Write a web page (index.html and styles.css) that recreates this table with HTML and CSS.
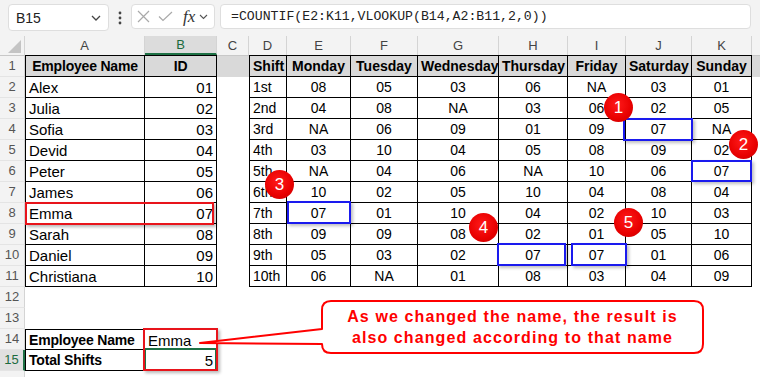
FILE: index.html
```html
<!DOCTYPE html>
<html>
<head>
<meta charset="utf-8">
<link rel="stylesheet" href="styles.css">
</head>
<body>
<div class="toolbar">
  <div class="namebox"><span>B15</span>
    <svg class="chev" width="10" height="6" viewBox="0 0 10 6"><polyline points="1,1 5,5 9,1" fill="none" stroke="#444" stroke-width="1.3"/></svg>
  </div>
  <div class="dots"><svg width="4" height="14" viewBox="0 0 4 14"><circle cx="2" cy="2" r="1.4" fill="#444"/><circle cx="2" cy="7" r="1.4" fill="#444"/><circle cx="2" cy="12" r="1.4" fill="#444"/></svg></div>
  <div class="fxbox">
    <svg width="13" height="13" viewBox="0 0 13 13"><path d="M1 1 L12 12 M12 1 L1 12" stroke="#a9a9a9" stroke-width="1.2" fill="none"/></svg>
    <svg width="15" height="11" viewBox="0 0 15 11"><polyline points="1,5.5 5,9.5 14,1" stroke="#a9a9a9" stroke-width="1.2" fill="none"/></svg>
    <span class="fx">fx</span>
    <svg width="9" height="6" viewBox="0 0 9 6"><polyline points="1,1 4.5,4.5 8,1" fill="none" stroke="#555" stroke-width="1.1"/></svg>
  </div>
  <div class="formula">=COUNTIF(E2:K11,VLOOKUP(B14,A2:B11,2,0))</div>
</div>

<div class="sheet">
  <!-- column headers -->
  <div class="corner"><svg width="13" height="13" viewBox="0 0 13 13"><polygon points="13,0 13,13 0,13" fill="#c4c4c4"/></svg></div>
  <div class="ch">A</div><div class="ch selc">B</div><div class="ch">C</div><div class="ch">D</div><div class="ch">E</div><div class="ch">F</div><div class="ch">G</div><div class="ch">H</div><div class="ch">I</div><div class="ch">J</div><div class="ch">K</div><div class="ch last"></div>

  <!-- row 1 -->
  <div class="rh r1">1</div>
  <div class="c g t tl tt b m lf">Employee Name</div>
  <div class="c g t tt b m lf">ID</div>
  <div class="c g gt"></div>
  <div class="c g t tl tt b">Shift</div>
  <div class="c g t tt b m">Monday</div>
  <div class="c g t tt b m">Tuesday</div>
  <div class="c g t tt b m">Wednesday</div>
  <div class="c g t tt b m">Thursday</div>
  <div class="c g t tt b m">Friday</div>
  <div class="c g t tt b m">Saturday</div>
  <div class="c g t tt b m">Sunday</div>
  <div class="c g gt"></div>

  <!-- row 2 -->
  <div class="rh">2</div>
  <div class="c t tl lf">Alex</div><div class="c t r lf">01</div><div class="c"></div>
  <div class="c t tl">1st</div><div class="c t m">08</div><div class="c t m">05</div><div class="c t m">03</div><div class="c t m">06</div><div class="c t m">NA</div><div class="c t m">03</div><div class="c t m">01</div><div class="c"></div>
  <!-- row 3 -->
  <div class="rh">3</div>
  <div class="c t tl lf">Julia</div><div class="c t r lf">02</div><div class="c"></div>
  <div class="c t tl">2nd</div><div class="c t m">04</div><div class="c t m">08</div><div class="c t m">NA</div><div class="c t m">03</div><div class="c t m">06</div><div class="c t m">02</div><div class="c t m">05</div><div class="c"></div>
  <!-- row 4 -->
  <div class="rh">4</div>
  <div class="c t tl lf">Sofia</div><div class="c t r lf">03</div><div class="c"></div>
  <div class="c t tl">3rd</div><div class="c t m">NA</div><div class="c t m">06</div><div class="c t m">09</div><div class="c t m">01</div><div class="c t m">09</div><div class="c t m">07</div><div class="c t m">NA</div><div class="c"></div>
  <!-- row 5 -->
  <div class="rh">5</div>
  <div class="c t tl lf">Devid</div><div class="c t r lf">04</div><div class="c"></div>
  <div class="c t tl">4th</div><div class="c t m">03</div><div class="c t m">10</div><div class="c t m">04</div><div class="c t m">05</div><div class="c t m">08</div><div class="c t m">09</div><div class="c t m">02</div><div class="c"></div>
  <!-- row 6 -->
  <div class="rh">6</div>
  <div class="c t tl lf">Peter</div><div class="c t r lf">05</div><div class="c"></div>
  <div class="c t tl">5th</div><div class="c t m">NA</div><div class="c t m">04</div><div class="c t m">06</div><div class="c t m">NA</div><div class="c t m">10</div><div class="c t m">06</div><div class="c t m">07</div><div class="c"></div>
  <!-- row 7 -->
  <div class="rh">7</div>
  <div class="c t tl lf">James</div><div class="c t r lf">06</div><div class="c"></div>
  <div class="c t tl">6th</div><div class="c t m">10</div><div class="c t m">02</div><div class="c t m">05</div><div class="c t m">10</div><div class="c t m">04</div><div class="c t m">08</div><div class="c t m">04</div><div class="c"></div>
  <!-- row 8 -->
  <div class="rh">8</div>
  <div class="c t tl lf">Emma</div><div class="c t r lf">07</div><div class="c"></div>
  <div class="c t tl">7th</div><div class="c t m">07</div><div class="c t m">01</div><div class="c t m">10</div><div class="c t m">04</div><div class="c t m">02</div><div class="c t m">10</div><div class="c t m">03</div><div class="c"></div>
  <!-- row 9 -->
  <div class="rh">9</div>
  <div class="c t tl lf">Sarah</div><div class="c t r lf">08</div><div class="c"></div>
  <div class="c t tl">8th</div><div class="c t m">09</div><div class="c t m">09</div><div class="c t m">08</div><div class="c t m">02</div><div class="c t m">01</div><div class="c t m">05</div><div class="c t m">10</div><div class="c"></div>
  <!-- row 10 -->
  <div class="rh">10</div>
  <div class="c t tl lf">Daniel</div><div class="c t r lf">09</div><div class="c"></div>
  <div class="c t tl">9th</div><div class="c t m">05</div><div class="c t m">03</div><div class="c t m">02</div><div class="c t m">07</div><div class="c t m">07</div><div class="c t m">01</div><div class="c t m">06</div><div class="c"></div>
  <!-- row 11 -->
  <div class="rh">11</div>
  <div class="c t tl lf">Christiana</div><div class="c t r lf">10</div><div class="c"></div>
  <div class="c t tl">10th</div><div class="c t m">06</div><div class="c t m">NA</div><div class="c t m">01</div><div class="c t m">08</div><div class="c t m">03</div><div class="c t m">04</div><div class="c t m">09</div><div class="c"></div>
  <!-- row 12-13 -->
  <div class="rh">12</div><div class="c span"></div>
  <div class="rh">13</div><div class="c span"></div>
  <!-- row 14 -->
  <div class="rh">14</div>
  <div class="c t tl tt b lf">Employee Name</div><div class="c t tt lf">Emma</div><div class="c rest"></div>
  <!-- row 15 -->
  <div class="rh selr">15</div>
  <div class="c t tl b lf">Total Shifts</div><div class="c t r lf">5</div><div class="c rest"></div>
  <!-- row 16 (cut off at the window edge) -->
  <div class="rh"></div><div class="c span"></div>
</div>

<!-- overlays -->
<div class="hl-red row8"></div>
<div class="sel15"></div>
<div class="hl-red res"></div>
<div class="hl-blue j4"></div>
<div class="hl-blue k6"></div>
<div class="hl-blue e8"></div>
<div class="hl-blue h10"></div>
<div class="hl-blue i10"></div>

<div class="badge n1">1</div>
<div class="badge n2">2</div>
<div class="badge n3">3</div>
<div class="badge n4">4</div>
<div class="badge n5">5</div>

<svg class="callout-shape" width="515" height="65" viewBox="0 0 515 65">
  <path d="M136 6 H499 Q508 6 508 15 V49 Q508 58 499 58 H136 Q127 58 127 49 L5 48 L127 34 V15 Q127 6 136 6 Z" fill="#fff" stroke="#ff0000" stroke-width="2" stroke-linejoin="round"/>
</svg>
<div class="callout-text">As we changed the name, the result is<br>also changed according to that name</div>
</body>
</html>
```
FILE: styles.css
```css
html, body {
  margin: 0;
  padding: 0;
}
body {
  width: 760px;
  height: 377px;
  overflow: hidden;
  background: #fff;
  position: relative;
  font-family: "Liberation Sans", Arial, sans-serif;
  color: #000;
}

/* ---------- toolbar ---------- */
.toolbar {
  height: 36px;
  box-sizing: border-box;
  background: #f3f3f3;
  display: flex;
  align-items: flex-start;
  padding: 4px 0 0 8px;
}
.namebox {
  width: 101px;
  height: 27px;
  box-sizing: border-box;
  background: #fff;
  border: 1px solid #dedede;
  border-radius: 4px;
  display: flex;
  align-items: center;
  justify-content: space-between;
  padding: 0 7px 0 7px;
  font-size: 14px;
  color: #222;
}
.namebox span { padding-top: 1px; }
.dots {
  width: 22px;
  height: 27px;
  display: flex;
  align-items: center;
  justify-content: center;
}
.fxbox {
  width: 84px;
  height: 25px;
  box-sizing: border-box;
  background: #fff;
  border: 1px solid #dedede;
  border-radius: 4px;
  display: flex;
  align-items: center;
  padding: 0 3px 0 5px;
  gap: 8px;
}
.fxbox .fx {
  font-family: "Liberation Serif", "DejaVu Serif", serif;
  font-style: italic;
  font-size: 17px;
  color: #333;
  margin-left: 2px;
  margin-right: -4px;
  line-height: 1;
}
.formula {
  margin-left: 5px;
  width: 531px;
  height: 25px;
  box-sizing: border-box;
  background: #fff;
  border: 1px solid #dedede;
  border-radius: 4px;
  padding: 0 0 0 10px;
  font-family: "Liberation Mono", "DejaVu Sans Mono", monospace;
  font-size: 13.2px;
  line-height: 24px;
  color: #222;
  white-space: nowrap;
}

/* ---------- sheet grid ---------- */
.sheet {
  display: grid;
  grid-template-columns: 25px 120px 72px 32px 38px 64px 67px 81px 69px 58px 66px 60px 8px;
  grid-template-rows: 19px 22px repeat(15, 21px);
}
.corner {
  background: #f3f3f3;
  border-right: 1px solid #d4d4d4;
  box-sizing: border-box;
  display: flex;
  align-items: flex-end;
  justify-content: flex-end;
  padding: 0 3px 2px 0;
}
.ch {
  background: #f3f3f3;
  border-right: 1px solid #d4d4d4;
  box-sizing: border-box;
  font-size: 13px;
  color: #444;
  text-align: center;
  line-height: 19px;
}
.ch.last { border-right: none; }
.ch.selc {
  background: #dcdcdc;
  color: #1b6b3e;
  border-bottom: 2px solid #1e7145;
  line-height: 18px;
}
.rh {
  background: #f3f3f3;
  border-right: 1px solid #d4d4d4;
  border-bottom: 1px solid #e4e4e4;
  box-sizing: border-box;
  font-size: 13px;
  color: #555;
  text-align: center;
  line-height: 20px;
}
.rh.r1 {
  border-top: 1px solid #c8c8c8;
}
.rh.selr {
  background: #e0e0e0;
  color: #1b6b3e;
  border-right: 2px solid #1e7145;
}

.c {
  box-sizing: border-box;
  padding: 1px 3px 0 3px;
  font-size: 14px;
  line-height: 19px;
  white-space: nowrap;
  overflow: hidden;
}
.c.lf { font-size: 15px; }
.c.lf.b { font-size: 14px; letter-spacing: -0.2px; }
.c.g { background: #d9d9d9; }
.c.gt { border-top: 1px solid #c8c8c8; }
.c.t {
  border-right: 1px solid #000;
  border-bottom: 1px solid #000;
}
.c.tl { border-left: 1px solid #000; }
.c.tt { border-top: 1px solid #000; }
.c.b { font-weight: bold; }
.c.m { text-align: center; }
.c.r { text-align: right; }
.c.span { grid-column: span 12; }
.c.rest { grid-column: span 10; }

/* ---------- overlays ---------- */
.hl-red, .hl-blue, .sel15 {
  position: absolute;
  box-sizing: border-box;
}
.hl-red {
  border: 2px solid #e8141b;
  box-shadow: 2px 2px 3px rgba(0, 0, 0, 0.28);
}
.hl-blue {
  border: 2px solid #1a1aee;
  box-shadow: 2px 2px 3px rgba(0, 0, 0, 0.25);
}
.row8 { left: 25px; top: 202px; width: 189px; height: 23px; }
.res { left: 143px; top: 328px; width: 75px; height: 43px; }
.sel15 {
  left: 144px; top: 348px; width: 73px; height: 23px;
  border: 2px solid #1e7145;
}
.j4 { left: 623px; top: 118px; width: 70px; height: 23px; }
.k6 { left: 691px; top: 160px; width: 61px; height: 22px; }
.e8 { left: 287px; top: 201px; width: 64px; height: 23px; }
.h10 { left: 497px; top: 243px; width: 69px; height: 23px; }
.i10 { left: 571px; top: 243px; width: 56px; height: 23px; }

.badge {
  position: absolute;
  width: 29px;
  height: 29px;
  border-radius: 50%;
  background: radial-gradient(circle at 45% 40%, #ff1a1a 0%, #e80000 60%, #c00000 100%);
  color: #fff;
  font-family: "Liberation Sans", Arial, sans-serif;
  font-size: 17px;
  line-height: 29px;
  text-align: center;
}
.n1 { left: 604px; top: 93px; }
.n2 { left: 729px; top: 130px; }
.n3 { left: 265px; top: 170px; }
.n4 { left: 469px; top: 213px; }
.n5 { left: 614px; top: 208px; }

.callout-shape {
  position: absolute;
  left: 195px;
  top: 295px;
}
.callout-text {
  position: absolute;
  left: 322px;
  top: 301px;
  width: 381px;
  height: 52px;
  box-sizing: border-box;
  padding-top: 5px;
  text-align: center;
  color: #ff0000;
  font-family: "Liberation Sans", Arial, sans-serif;
  font-size: 16px;
  font-weight: bold;
  line-height: 21px;
  letter-spacing: 1.1px;
  white-space: nowrap;
}
```
